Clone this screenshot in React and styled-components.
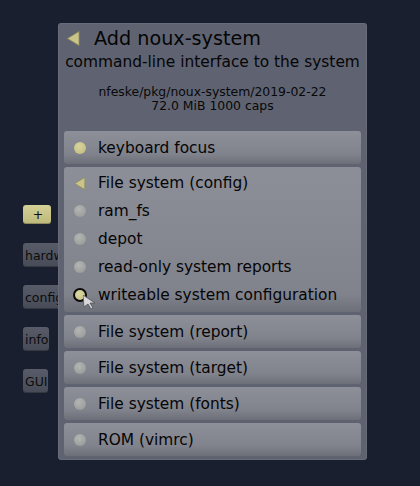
import React from 'react';
import styled, { createGlobalStyle } from 'styled-components';

const GlobalStyle = createGlobalStyle`
  html, body {
    margin: 0;
    padding: 0;
    background: #1a1f2f;
  }
  body {
    font-family: "DejaVu Sans", "Liberation Sans", sans-serif;
  }
`;

const Screen = styled.div`
  position: relative;
  width: 420px;
  height: 486px;
  overflow: hidden;
  background: #1a1f2f;
`;

const SideBar = styled.div`
  display: flex;
  flex-direction: column;
  align-items: flex-start;
  padding: 205px 0 0 23px;
  gap: 18px;
`;

const SideButton = styled.div`
  box-sizing: border-box;
  height: ${({ $small }) => ($small ? 19 : 24)}px;
  width: ${({ $w }) => $w}px;
  margin-bottom: ${({ $small }) => ($small ? 1 : 0)}px;
  border-radius: 3px;
  padding-left: 2px;
  display: flex;
  align-items: center;
  justify-content: ${({ $small }) => ($small ? 'center' : 'flex-start')};
  font-size: 12.5px;
  color: #0c0c0c;
  overflow: hidden;
  white-space: nowrap;
  background: ${({ $active }) =>
    $active
      ? 'linear-gradient(#d4d096, #bdb97c)'
      : 'linear-gradient(#585c68, #474b57)'};
  box-shadow: inset 0 -1px 0 rgba(0, 0, 0, 0.25);
`;

const Panel = styled.div`
  position: absolute;
  left: 58px;
  top: 23px;
  width: 309px;
  height: 437px;
  box-sizing: border-box;
  padding: 4px 6px 4px;
  border-radius: 3px;
  background: #5f6371;
  box-shadow: inset 0 0 0 1px rgba(255, 255, 255, 0.06);
  display: flex;
  flex-direction: column;
`;

const TitleRow = styled.div`
  display: flex;
  align-items: center;
  height: 22px;
  padding-left: 3px;
  gap: 14px;
  font-size: 19.2px;
  color: #050505;
`;

const Subtitle = styled.div`
  margin-top: 3px;
  height: 20px;
  line-height: 20px;
  font-size: 15.4px;
  text-align: center;
  color: #050505;
  white-space: nowrap;
`;

const Info = styled.div`
  margin-top: 13px;
  margin-bottom: 18px;
  font-size: 12.4px;
  line-height: 14px;
  text-align: center;
  color: #080808;
`;

const List = styled.div`
  display: flex;
  flex-direction: column;
  gap: 3px;
`;

const Row = styled.div`
  height: 33px;
  box-sizing: border-box;
  border-radius: 3px;
  padding-left: 10px;
  display: flex;
  align-items: center;
  gap: 12px;
  font-size: 15.4px;
  color: #050505;
  background: linear-gradient(#8e9099, #80828c 70%, #6c6e78);
`;

const Group = styled.div`
  box-sizing: border-box;
  border-radius: 3px;
  padding: 2px 0 3px;
  background: linear-gradient(#8c8e98, #80828c 88%, #6d6f79);
`;

const Item = styled.div`
  position: relative;
  height: 28px;
  padding-left: 10px;
  display: flex;
  align-items: center;
  gap: 12px;
  font-size: 15.4px;
  color: #050505;
`;

const Dot = styled.span`
  flex: none;
  width: 12px;
  height: 12px;
  border-radius: 50%;
  background: ${({ $on }) =>
    $on
      ? 'radial-gradient(circle at 40% 35%, #d8d49c, #bdb97e)'
      : 'radial-gradient(circle at 40% 35%, #b4b6b4, #939593)'};
`;

const SelectedDot = styled.span`
  flex: none;
  width: 14px;
  height: 14px;
  margin-left: -1px;
  margin-right: -1px;
  box-sizing: border-box;
  border-radius: 50%;
  border: 2px solid #0a0a0a;
  background: radial-gradient(circle at 40% 35%, #dcd8a2, #c1bd82);
`;

const Cursor = styled.svg`
  position: absolute;
  left: 19px;
  top: 14px;
`;

const Back = ({ w, h }) => (
  <svg width={w} height={h} viewBox="0 0 13 15" style={{ flex: 'none' }}>
    <polygon points="12,0.5 12,14.5 0.5,7.5" fill="#c9c58a" stroke="#8f8c5c" strokeWidth="0.8" />
  </svg>
);

const rows = ['File system (report)', 'File system (target)', 'File system (fonts)', 'ROM (vimrc)'];

export default function App() {
  return (
    <Screen>
      <GlobalStyle />
      <SideBar>
        <SideButton $small $active $w={28}>+</SideButton>
        <SideButton $w={42}>hardware</SideButton>
        <SideButton $w={40}>config</SideButton>
        <SideButton $w={26}>info</SideButton>
        <SideButton $w={25}>GUI</SideButton>
      </SideBar>

      <Panel>
        <TitleRow>
          <Back w={13} h={15} />
          <span>Add noux-system</span>
        </TitleRow>
        <Subtitle>command-line interface to the system</Subtitle>
        <Info>
          nfeske/pkg/noux-system/2019-02-22
          <br />
          72.0 MiB 1000 caps
        </Info>

        <List>
          <Row>
            <Dot $on />
            keyboard focus
          </Row>
          <Group>
            <Item>
              <Back w={12} h={13} />
              File system (config)
            </Item>
            <Item>
              <Dot />
              ram_fs
            </Item>
            <Item>
              <Dot />
              depot
            </Item>
            <Item>
              <Dot />
              read-only system reports
            </Item>
            <Item>
              <SelectedDot />
              writeable system configuration
              <Cursor width="14" height="14" viewBox="0 0 14 14">
                <polygon points="0,0 12,8 7,8 10,13 8,14 5,9 1,12" fill="#d8d8dc" stroke="#505058" strokeWidth="0.8" />
              </Cursor>
            </Item>
          </Group>
          {rows.map((r) => (
            <Row key={r}>
              <Dot />
              {r}
            </Row>
          ))}
        </List>
      </Panel>
    </Screen>
  );
}
